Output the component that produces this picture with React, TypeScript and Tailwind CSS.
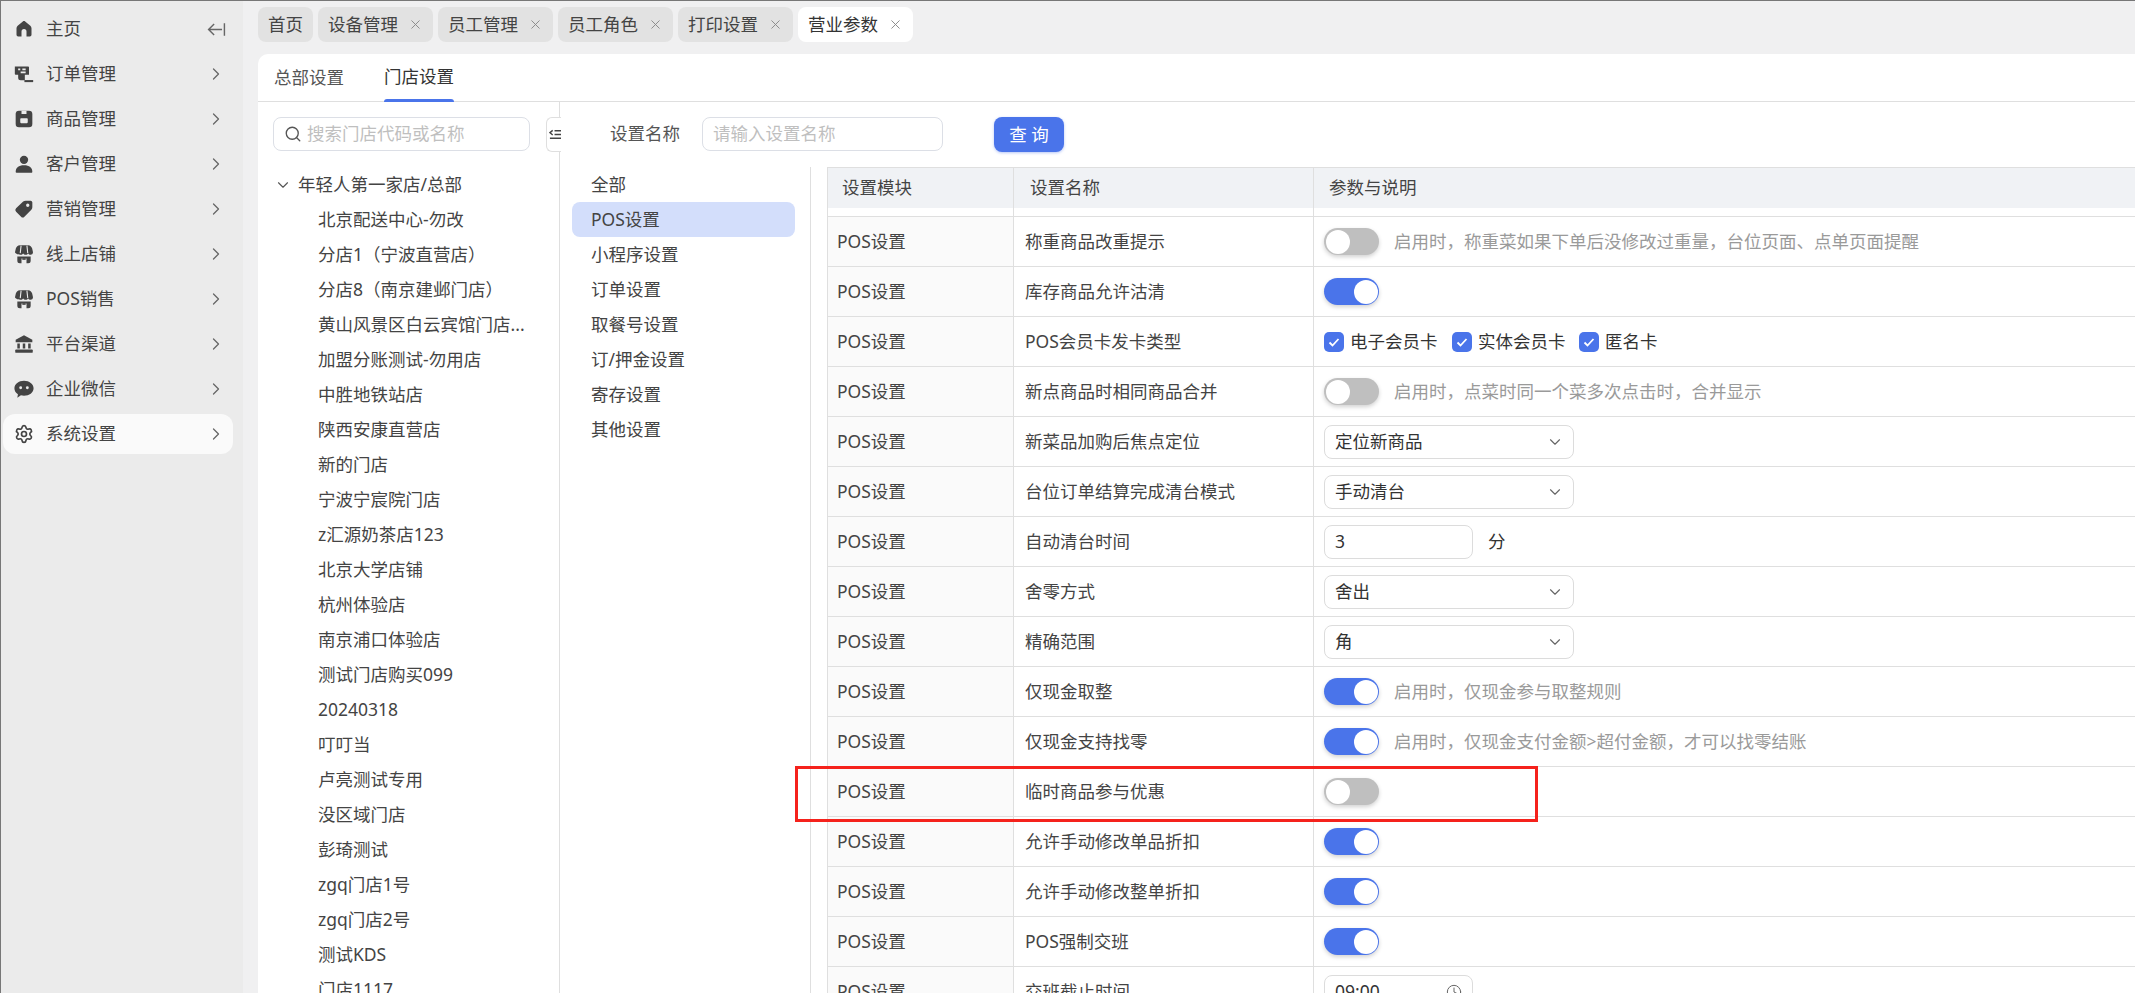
import { ChevronDown, ChevronRight, Clock, Search, Settings, X } from 'lucide-react'

const navItems = ['订单管理', '商品管理', '客户管理', '营销管理', '线上店铺', 'POS销售', '平台渠道', '企业微信', '系统设置']
const pageTabs = ['设备管理', '员工管理', '员工角色', '打印设置', '营业参数']
const stores = [
  '北京配送中心-勿改', '分店1（宁波直营店）', '分店8（南京建邺门店）', '黄山风景区白云宾馆门店...', '加盟分账测试-勿用店',
  '中胜地铁站店', '陕西安康直营店', '新的门店', '宁波宁宸院门店', 'z汇源奶茶店123', '北京大学店铺', '杭州体验店',
  '南京浦口体验店', '测试门店购买099', '20240318', '叮叮当', '卢亮测试专用', '没区域门店', '彭琦测试', 'zgq门店1号',
  'zgq门店2号', '测试KDS', '门店1117',
]
const categories = ['全部', 'POS设置', '小程序设置', '订单设置', '取餐号设置', '订/押金设置', '寄存设置', '其他设置']

type Row = {
  name: string
  toggle?: boolean
  desc?: string
  select?: string
  number?: string
  time?: string
  cards?: boolean
}

const rows: Row[] = [
  { name: '称重商品改重提示', toggle: false, desc: '启用时，称重菜如果下单后没修改过重量，台位页面、点单页面提醒' },
  { name: '库存商品允许沽清', toggle: true },
  { name: 'POS会员卡发卡类型', cards: true },
  { name: '新点商品时相同商品合并', toggle: false, desc: '启用时，点菜时同一个菜多次点击时，合并显示' },
  { name: '新菜品加购后焦点定位', select: '定位新商品' },
  { name: '台位订单结算完成清台模式', select: '手动清台' },
  { name: '自动清台时间', number: '3' },
  { name: '舍零方式', select: '舍出' },
  { name: '精确范围', select: '角' },
  { name: '仅现金取整', toggle: true, desc: '启用时，仅现金参与取整规则' },
  { name: '仅现金支持找零', toggle: true, desc: '启用时，仅现金支付金额>超付金额，才可以找零结账' },
  { name: '临时商品参与优惠', toggle: false },
  { name: '允许手动修改单品折扣', toggle: true },
  { name: '允许手动修改整单折扣', toggle: true },
  { name: 'POS强制交班', toggle: true },
  { name: '交班截止时间', time: '09:00' },
]

function NavIcon({ index }: { index: number }) {
  const common = { width: 20, height: 20, viewBox: '0 0 24 24', fill: '#444' }
  switch (index) {
    case -1:
      return (
        <svg {...common}>
          <path d="M12 2.500c-.5 0-1 .2-1.400.5L4.400 8C3.500 8.800 3 10 3 11.200V19a2 2 0 0 0 2 2h4v-6a3 3 0 0 1 6 0v6h4a2 2 0 0 0 2-2v-7.800c0-1.200-.5-2.400-1.400-3.200l-6.200-5c-.4-.3-.9-.5-1.400-.5z" />
        </svg>
      )
    case 0:
      return (
        <svg {...common}>
          <path d="M1 3h16a1 1 0 0 1 1 1v9h-5v6.500H8A3 3 0 0 1 5 16.500V13H2a1 1 0 0 1-1-1z" />
          <path d="M5 6.500h2.500M10 6.500h4M8 10h6" stroke="#ebebeb" strokeWidth="2" />
          <path d="M12.500 20.500H23" stroke="#444" strokeWidth="2.500" />
        </svg>
      )
    case 1:
      return (
        <svg {...common}>
          <rect x="2" y="2" width="20" height="20" rx="4" />
          <path d="M9 2v4h6V2" fill="#ebebeb" />
          <rect x="7.500" y="11" width="9" height="6" rx="1" fill="#ebebeb" />
        </svg>
      )
    case 2:
      return (
        <svg {...common}>
          <circle cx="12" cy="7" r="5" />
          <path d="M2 21.500c0-5 3.500-8 10-8s10 3 10 8c0 .5-.5 1-1 1H3c-.5 0-1-.5-1-1z" />
        </svg>
      )
    case 3:
      return (
        <svg {...common}>
          <path fillRule="evenodd" d="M14 2h6a2.500 2.500 0 0 1 2 2v6c0 1-.4 2-1.200 2.800l-8.300 8.400a2.800 2.800 0 0 1-4 0l-6-6a2.800 2.800 0 0 1 0-4L11 2.900C11.800 2.300 13 2 14 2zm2.500 3.500a2 2 0 1 0 0 4 2 2 0 0 0 0-4z" />
        </svg>
      )
    case 4:
    case 5:
      return (
        <svg {...common}>
          <path d="M7 1.500h10c2.500 0 4 1.500 4.800 4l1 4.500c0 2-1.500 3-2.900 3-1.200 0-2.300-.6-2.900-1.700-.6 1.100-1.700 1.700-3 1.700s-2.400-.6-3-1.700c-.6 1.100-1.700 1.700-3 1.700S1.200 12 1.200 10l1-4.500C3 3 4.500 1.500 7 1.500z" />
          <path d="M8.500 2l-1 9M15.500 2l1 9" stroke="#ebebeb" strokeWidth="1.300" />
          <path fillRule="evenodd" d="M4 15h16v5a3 3 0 0 1-3 3H7a3 3 0 0 1-3-3zm5 2.500V23h6v-5.500z" />
          <rect x="10" y="17" width="4" height="2" fill="#444" />
        </svg>
      )
    case 6:
      return (
        <svg {...common}>
          <path d="M12 1.500l10 5.500v3H2V7z" />
          <path d="M4 11.500h3v6H4zM10.500 11.500h3v6h-3zM17 11.500h3v6h-3z" />
          <rect x="1.500" y="18.500" width="21" height="4" rx="1" />
        </svg>
      )
    case 7:
      return (
        <svg {...common}>
          <path d="M12 2c6.300 0 11.500 3.800 11.500 9s-5.200 9-11.500 9c-1.300 0-2.500-.2-3.700-.5L4 22.500l.7-4.300C2 16.500.5 14 .5 11 .5 5.800 5.700 2 12 2z" />
          <circle cx="8" cy="10.500" r="1.700" fill="#ebebeb" />
          <circle cx="16" cy="10.500" r="1.700" fill="#ebebeb" />
        </svg>
      )
    default:
      return <Settings size={20} color="#444" strokeWidth={2} />
  }
}

function Toggle({ on }: { on: boolean }) {
  return (
    <div
      className={`flex h-[27px] w-[55px] shrink-0 items-center rounded-full p-[1.500px] shadow-[0_2px_4px_rgba(0,0,0,0.18)] ${
        on ? 'justify-end bg-[#4a74ea]' : 'justify-start bg-[#bfbfbf]'
      }`}
    >
      <span className="h-[24px] w-[24px] rounded-full bg-white" />
    </div>
  )
}

function CardCheck({ label, width }: { label: string; width: string }) {
  return (
    <div className={`flex items-center ${width}`}>
      <span className="flex h-[20px] w-[20px] items-center justify-center rounded-[5px] bg-[#4a74ea]">
        <svg width="14" height="14" viewBox="0 0 14 14" fill="none">
          <path d="M2.500 7.500l3 3 6-6.500" stroke="#fff" strokeWidth="1.800" />
        </svg>
      </span>
      <span className="ml-[6px] text-[#333]">{label}</span>
    </div>
  )
}

function ParamCell({ row }: { row: Row }) {
  if (row.cards) {
    return (
      <>
        <CardCheck label="电子会员卡" width="w-[128px]" />
        <CardCheck label="实体会员卡" width="w-[127px]" />
        <CardCheck label="匿名卡" width="w-[100px]" />
      </>
    )
  }
  if (row.select) {
    return (
      <div className="flex h-[34px] w-[250px] items-center justify-between rounded-lg border border-[#dcdcdc] pl-[10px] pr-[9px] text-[#333]">
        {row.select}
        <ChevronDown size={18} color="#666" strokeWidth={1.500} />
      </div>
    )
  }
  if (row.number) {
    return (
      <>
        <div className="flex h-[34px] w-[149px] items-center rounded-lg border border-[#dcdcdc] pl-[10px] text-[#333]">{row.number}</div>
        <span className="ml-[15px] text-[#333]">分</span>
      </>
    )
  }
  if (row.time) {
    return (
      <div className="flex h-[34px] w-[149px] items-center justify-between rounded-lg border border-[#dcdcdc] pl-[10px] pr-[10px] text-[#333]">
        {row.time}
        <Clock size={16} color="#666" strokeWidth={1.500} />
      </div>
    )
  }
  return (
    <>
      <Toggle on={!!row.toggle} />
      {row.desc && <span className="ml-[15px] text-[#9a9a9a]">{row.desc}</span>}
    </>
  )
}

export default function App() {
  return (
    <div className="relative flex h-[993px] w-[2135px] overflow-hidden border-l border-t border-[#777] bg-[#f0f0f1] font-['Noto_Sans','Noto_Sans_CJK_SC',sans-serif] text-[17.500px] leading-none text-[#444]">
      <aside className="w-[242px] shrink-0 bg-[#ebebeb] pl-[2px] pt-[8px]">
        <div className="mb-[5px] flex h-10 w-[230px] items-center rounded-xl pl-[11px] pr-[7px]">
          <span className="flex w-[20px] justify-center"><NavIcon index={-1} /></span>
          <span className="ml-[12px] flex-1">主页</span>
          <svg width="19" height="19" viewBox="0 0 24 24" fill="none" stroke="#666" strokeWidth="1.800">
            <path d="M2 12h17M9 5l-7 7 7 7M22 4v16" />
          </svg>
        </div>
        {navItems.map((item, i) => (
          <div
            key={item}
            className={`mb-[5px] flex h-10 w-[230px] items-center rounded-xl pl-[11px] pr-[7px] ${i === 8 ? 'bg-[#fafafa]' : ''}`}
          >
            <span className="flex w-[20px] justify-center"><NavIcon index={i} /></span>
            <span className="ml-[12px] flex-1">{item}</span>
            <ChevronRight size={20} color="#666" strokeWidth={1.500} />
          </div>
        ))}
      </aside>

      <main className="flex min-w-0 flex-1 flex-col">
        <div className="flex h-[53px] shrink-0 gap-[5px] pl-[15px] pt-[6px]">
          <div className="flex h-[35px] w-[55px] items-center justify-center rounded-lg bg-[#e2e2e2]">首页</div>
          {pageTabs.map((tab, i) => (
            <div
              key={tab}
              className={`flex h-[35px] w-[115px] items-center justify-between rounded-lg pl-[10px] pr-[10px] ${
                i === 4 ? 'bg-white text-[#333]' : 'bg-[#e2e2e2]'
              }`}
            >
              {tab}
              <X size={15} color="#888" strokeWidth={1.500} />
            </div>
          ))}
        </div>

        <div className="ml-[15px] flex min-h-0 flex-1 flex-col rounded-tl-[10px] bg-white">
          <div className="flex h-[48px] shrink-0 gap-[40px] border-b border-[#dfdfdf] pl-[16px]">
            <div className="flex h-[48px] w-[70px] items-center justify-center text-[#555]">总部设置</div>
            <div className="flex h-[48px] w-[70px] flex-col items-center justify-between">
              <span className="flex flex-1 items-center text-[#333]">门店设置</span>
              <span className="h-[3px] w-full rounded-t-[3px] bg-[#4a74ea]" />
            </div>
          </div>

          <div className="flex min-h-0 flex-1">
            <section className="relative w-[302px] shrink-0 border-r border-[#dfdfdf] pl-[15px] pt-[15px]">
              <div className="flex h-[34px] w-[257px] items-center rounded-lg border border-[#dcdfe6] pl-[10px] text-[#bfbfbf]">
                <Search size={18} color="#555" strokeWidth={1.800} />
                <span className="ml-[5px]">搜索门店代码或名称</span>
              </div>
              <div className="absolute left-[288px] top-[15px] flex h-[35px] w-[15px] items-center rounded-l-md border border-r-0 border-[#dfdfdf] bg-white pl-[2px]">
                <svg width="13" height="13" viewBox="0 0 13 13" fill="none" stroke="#444" strokeWidth="1.500">
                  <path d="M4 2L1 4.500 4 7M6 2.500h7M6 6.500h7M1 10.500h12" />
                </svg>
              </div>
              <div className="mt-[16px] flex h-[35px] items-center pl-[1px] text-[#444]">
                <ChevronDown size={18} color="#555" strokeWidth={1.500} />
                <span className="ml-[6px]">年轻人第一家店/总部</span>
              </div>
              {stores.map((store) => (
                <div key={store} className="flex h-[35px] items-center whitespace-nowrap pl-[45px] text-[#444]">
                  {store}
                </div>
              ))}
            </section>

            <section className="flex min-w-0 flex-1 flex-col">
              <div className="flex h-[65px] shrink-0 items-start pl-[50px] pt-[15px]">
                <span className="flex h-[34px] w-[70px] items-center text-[#555]">设置名称</span>
                <div className="ml-[22px] flex h-[34px] w-[241px] items-center rounded-lg border border-[#dcdfe6] pl-[10px] text-[#bfbfbf]">
                  请输入设置名称
                </div>
                <button className="ml-[51px] h-[35px] w-[70px] rounded-lg bg-[#4a74ea] text-[17.500px] text-white shadow-[0_1px_3px_rgba(74,116,234,0.4)]">
                  查 询
                </button>
              </div>

              <div className="flex min-h-0 flex-1">
                <nav className="w-[251px] shrink-0 border-r border-[#dfdfdf] pl-[12px] pr-[15px]">
                  {categories.map((cat) => (
                    <div
                      key={cat}
                      className={`flex h-[35px] items-center rounded-lg pl-[19px] ${cat === 'POS设置' ? 'bg-[#d3defb]' : ''}`}
                    >
                      {cat}
                    </div>
                  ))}
                </nav>

                <div className="ml-[16px] min-w-0 flex-1 border-l border-[#dfdfdf]">
                  <div className="grid h-[41px] grid-cols-[186px_300px_1fr] border-t border-[#dfdfdf] bg-[#f0f2f5] text-[#444]">
                    <div className="flex items-center border-r border-[#dfdfdf] pl-[14px]">设置模块</div>
                    <div className="flex items-center border-r border-[#dfdfdf] pl-[16px]">设置名称</div>
                    <div className="flex items-center pl-[15px]">参数与说明</div>
                  </div>
                  <div className="grid h-[9px] grid-cols-[186px_300px_1fr] border-b border-[#dfdfdf]">
                    <div className="border-r border-[#dfdfdf]" />
                    <div className="border-r border-[#dfdfdf]" />
                  </div>
                  {rows.map((row) => (
                    <div key={row.name} className="grid h-[50px] grid-cols-[186px_300px_1fr] border-b border-[#dfdfdf]">
                      <div className="flex items-center border-r border-[#dfdfdf] bg-[#fafafa] pl-[9px]">POS设置</div>
                      <div className="flex items-center border-r border-[#dfdfdf] pl-[11px]">{row.name}</div>
                      <div className="flex items-center pl-[10px]"><ParamCell row={row} /></div>
                    </div>
                  ))}
                </div>
              </div>
            </section>
          </div>
        </div>
      </main>

      <div className="pointer-events-none absolute left-[794px] top-[765px] h-[56px] w-[743px] border-[3px] border-[#f5221c]" />
    </div>
  )
}
